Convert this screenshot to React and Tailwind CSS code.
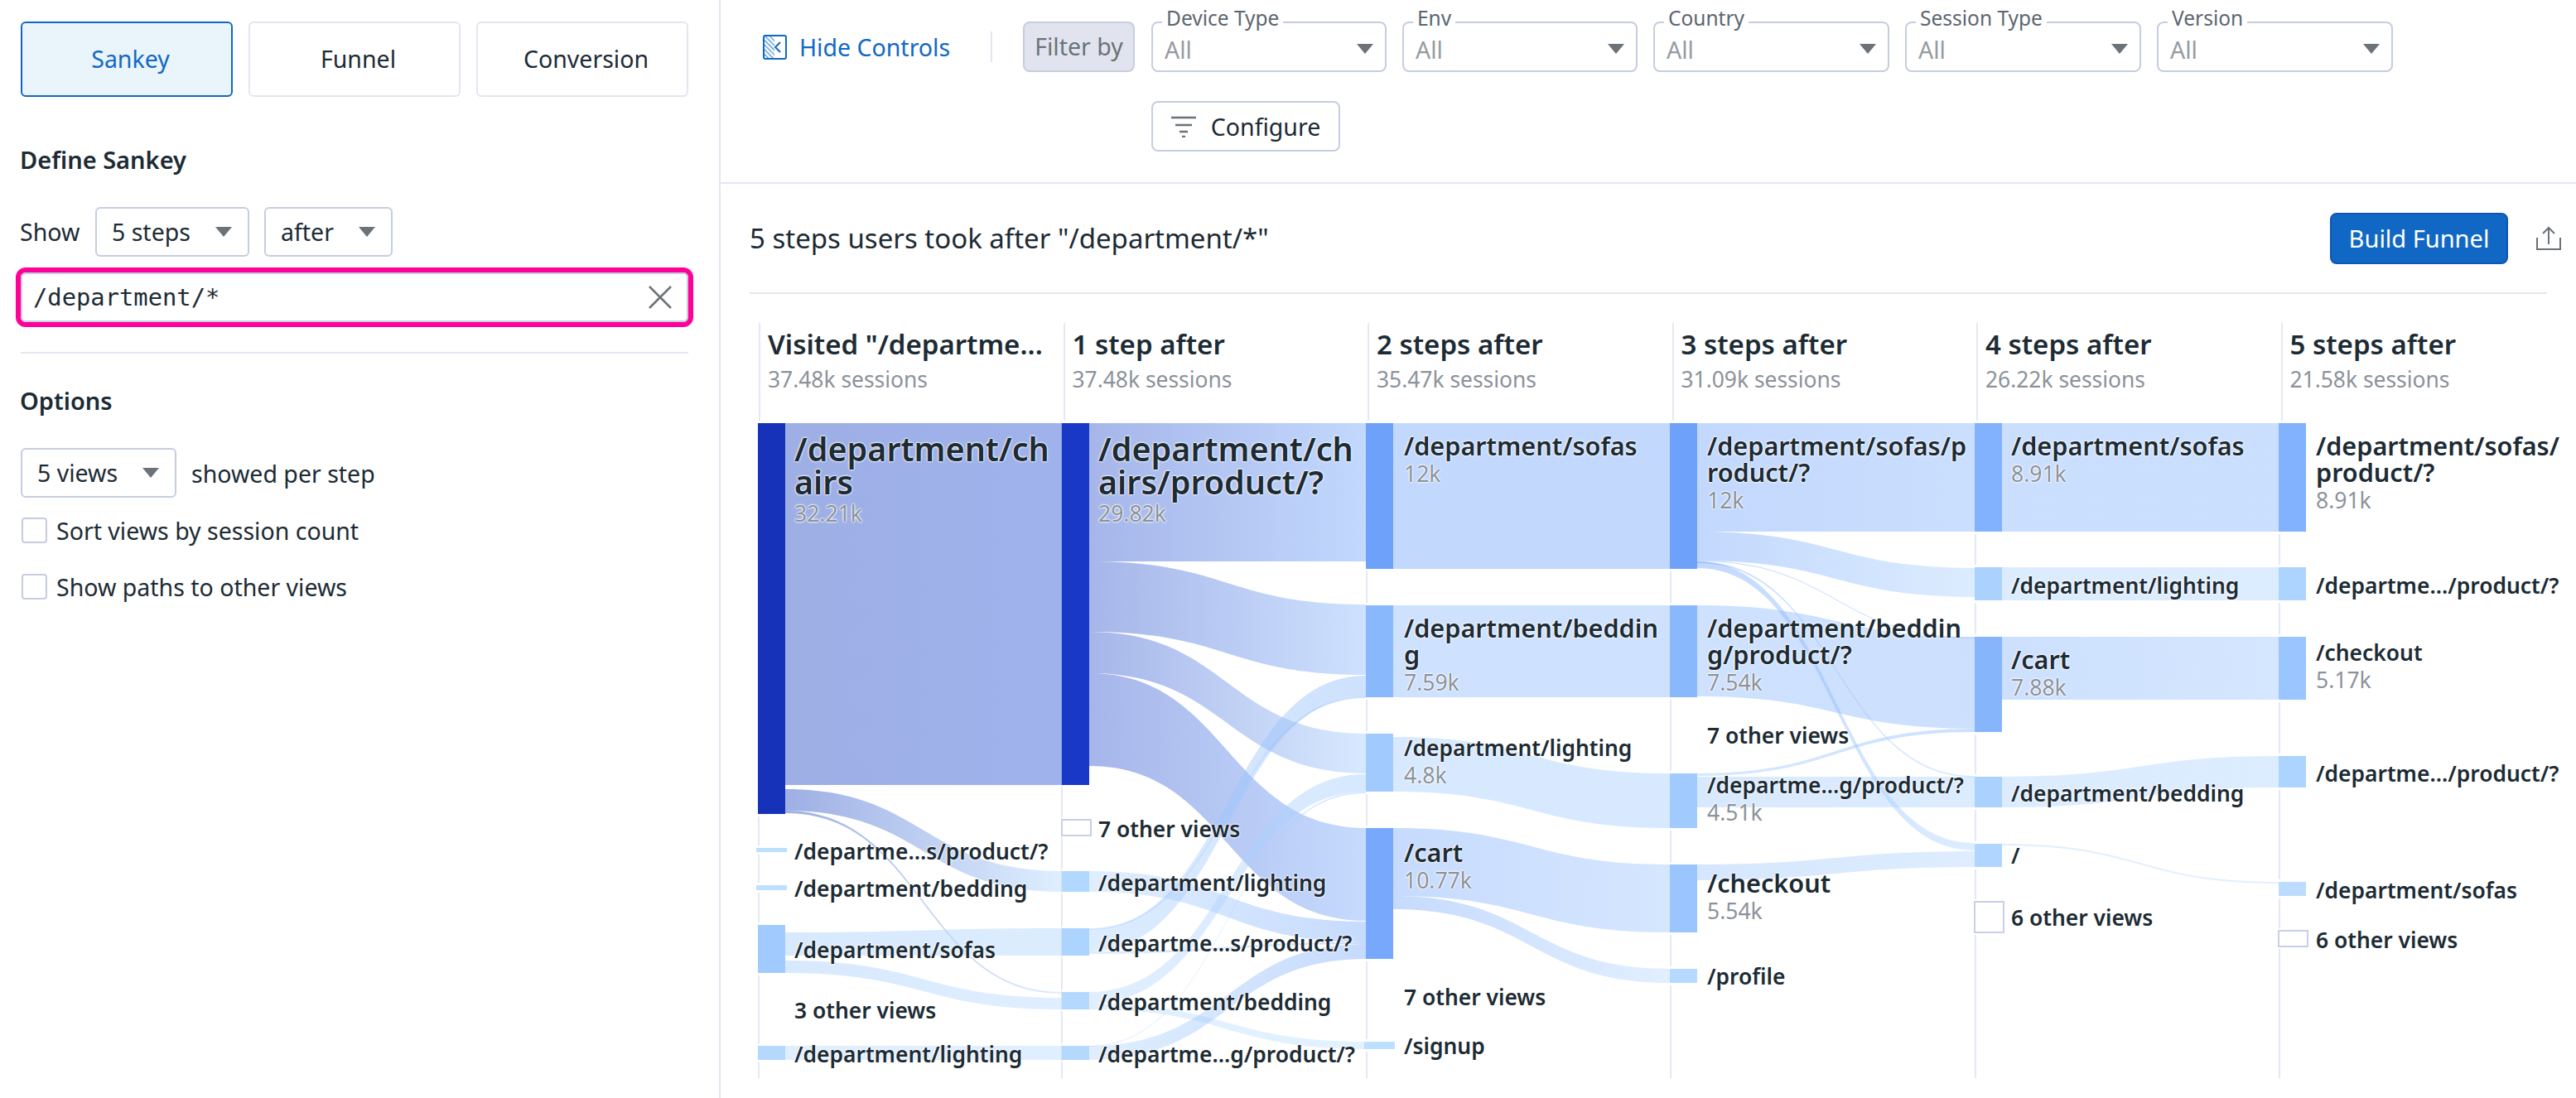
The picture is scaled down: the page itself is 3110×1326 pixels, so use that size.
import React from 'react';

const COLS = [915, 1282, 1649, 2016, 2384, 2751];
const NODE_W = 33;

// col, top, bottom, colour, kind
const NODES = [
  [0, 511, 983, '#1632b9'],
  [0, 1024, 1029, '#bde0ff', 'bar'],
  [0, 1069, 1075, '#bde0ff', 'bar'],
  [0, 1117, 1175, '#a1cbfe'],
  [0, 1263, 1280, '#b5d8ff'],
  [1, 511, 948, '#1a38c8'],
  [1, 990, 1009, '#ffffff', 'box'],
  [1, 1052, 1077, '#b3d8ff'],
  [1, 1121, 1154, '#add3ff'],
  [1, 1198, 1219, '#b5d8ff'],
  [1, 1263, 1280, '#b5d8ff'],
  [2, 511, 687, '#6ea2fa'],
  [2, 731, 842, '#8ab8fc'],
  [2, 886, 956, '#a1cbfe'],
  [2, 1000, 1158, '#78a8fb'],
  [2, 1258, 1267, '#bde0ff', 'bar'],
  [3, 511, 687, '#6ea2fa'],
  [3, 731, 842, '#8ab8fc'],
  [3, 934, 1000, '#a1cbfe'],
  [3, 1044, 1126, '#9bc5fe'],
  [3, 1170, 1187, '#b8d9ff'],
  [4, 511, 642, '#82b1fd'],
  [4, 685, 725, '#abd2ff'],
  [4, 769, 884, '#86b5fc'],
  [4, 938, 975, '#abd2ff'],
  [4, 1019, 1047, '#b0d5ff'],
  [4, 1089, 1126, '#ffffff', 'box'],
  [5, 511, 642, '#82b1fd'],
  [5, 685, 725, '#add3ff'],
  [5, 769, 845, '#9bc5fe'],
  [5, 913, 951, '#add3ff'],
  [5, 1065, 1082, '#bcdcff'],
  [5, 1124, 1143, '#ffffff', 'box'],
];

// source col, source top, source bottom, target top, target bottom, source colour, target colour
const LINKS = [
  [0, 511, 948, 511, 948, '#1640c0', '#1a48d0'],
  [0, 953, 979, 1052, 1077, '#1640c0', '#b3d8ff'],
  [0, 979, 982, 1198, 1200, '#1640c0', '#b5d8ff'],
  [0, 1126, 1154, 1121, 1154, '#a1cbfe', '#add3ff'],
  [0, 1160, 1175, 1205, 1219, '#a1cbfe', '#b5d8ff'],
  [0, 1263, 1280, 1263, 1280, '#b5d8ff', '#b5d8ff'],
  [1, 511, 678, 511, 678, '#2a50cc', '#6ea2fa'],
  [1, 678, 763, 730, 815, '#2a50cc', '#8ab8fc'],
  [1, 763, 813, 886, 934, '#2a50cc', '#a1cbfe'],
  [1, 813, 925, 1000, 1112, '#2a50cc', '#78a8fb'],
  [1, 1052, 1077, 1113, 1138, '#b3d8ff', '#78a8fb'],
  [1, 1122, 1149, 816, 841, '#add3ff', '#8ab8fc'],
  [1, 1149, 1152, 1138, 1140, '#add3ff', '#78a8fb'],
  [1, 1121, 1123, 841, 843, '#add3ff', '#8ab8fc'],
  [1, 1198, 1212, 935, 956, '#b5d8ff', '#a1cbfe'],
  [1, 1212, 1219, 1258, 1267, '#b5d8ff', '#bde0ff'],
  [1, 1263, 1280, 1140, 1158, '#b5d8ff', '#78a8fb'],
  [1, 1263, 1264, 956, 958, '#b5d8ff', '#a1cbfe'],
  [2, 511, 687, 511, 687, '#6ea2fa', '#6ea2fa'],
  [2, 731, 842, 731, 842, '#8ab8fc', '#8ab8fc'],
  [2, 890, 956, 934, 1000, '#a1cbfe', '#a1cbfe'],
  [2, 1000, 1082, 1044, 1126, '#78a8fb', '#9bc5fe'],
  [2, 1082, 1098, 1170, 1187, '#78a8fb', '#b8d9ff'],
  [3, 511, 642, 511, 642, '#6ea2fa', '#82b1fd'],
  [3, 642, 677, 686, 721, '#6ea2fa', '#abd2ff'],
  [3, 677, 678, 770, 771, '#6ea2fa', '#86b5fc'],
  [3, 678, 686, 1018, 1027, '#6ea2fa', '#b0d5ff'],
  [3, 678, 680, 937, 939, '#6ea2fa', '#abd2ff'],
  [3, 731, 841, 769, 880, '#8ab8fc', '#86b5fc'],
  [3, 934, 937, 880, 884, '#a1cbfe', '#86b5fc'],
  [3, 938, 975, 938, 975, '#a1cbfe', '#abd2ff'],
  [3, 1044, 1063, 1028, 1047, '#9bc5fe', '#b0d5ff'],
  [4, 511, 642, 511, 642, '#82b1fd', '#82b1fd'],
  [4, 685, 725, 685, 725, '#abd2ff', '#add3ff'],
  [4, 769, 845, 769, 845, '#86b5fc', '#9bc5fe'],
  [4, 938, 975, 913, 951, '#abd2ff', '#add3ff'],
  [4, 1019, 1021, 1065, 1067, '#b0d5ff', '#bcdcff'],
];

// left, top, lines, size, value
const LABELS = [
  [959, 522, ['/department/ch', 'airs'], 'lg', '32.21k'],
  [959, 1013, ['/departme...s/product/?'], 'sm'],
  [959, 1058, ['/department/bedding'], 'sm'],
  [959, 1132, ['/department/sofas'], 'sm'],
  [959, 1205, ['3 other views'], 'sm'],
  [959, 1258, ['/department/lighting'], 'sm'],
  [1326, 522, ['/department/ch', 'airs/product/?'], 'lg', '29.82k'],
  [1326, 986, ['7 other views'], 'sm'],
  [1326, 1051, ['/department/lighting'], 'sm'],
  [1326, 1124, ['/departme...s/product/?'], 'sm'],
  [1326, 1195, ['/department/bedding'], 'sm'],
  [1326, 1258, ['/departme...g/product/?'], 'sm'],
  [1695, 522, ['/department/sofas'], 'md', '12k'],
  [1695, 742, ['/department/beddin', 'g'], 'md', '7.59k'],
  [1695, 888, ['/department/lighting'], 'sm', '4.8k'],
  [1695, 1013, ['/cart'], 'md', '10.77k'],
  [1695, 1189, ['7 other views'], 'sm'],
  [1695, 1248, ['/signup'], 'sm'],
  [2061, 522, ['/department/sofas/p', 'roduct/?'], 'md', '12k'],
  [2061, 742, ['/department/beddin', 'g/product/?'], 'md', '7.54k'],
  [2061, 873, ['7 other views'], 'sm'],
  [2061, 933, ['/departme...g/product/?'], 'sm', '4.51k'],
  [2061, 1050, ['/checkout'], 'md', '5.54k'],
  [2061, 1164, ['/profile'], 'sm'],
  [2428, 522, ['/department/sofas'], 'md', '8.91k'],
  [2428, 692, ['/department/lighting'], 'sm'],
  [2428, 780, ['/cart'], 'md', '7.88k'],
  [2428, 943, ['/department/bedding'], 'sm'],
  [2428, 1018, ['/'], 'sm'],
  [2428, 1093, ['6 other views'], 'sm'],
  [2796, 522, ['/department/sofas/', 'product/?'], 'md', '8.91k'],
  [2796, 692, ['/departme.../product/?'], 'sm'],
  [2796, 773, ['/checkout'], 'sm', '5.17k'],
  [2796, 919, ['/departme.../product/?'], 'sm'],
  [2796, 1060, ['/department/sofas'], 'sm'],
  [2796, 1120, ['6 other views'], 'sm'],
];

const HEADERS = [
  ['Visited "/departme...', '37.48k sessions'],
  ['1 step after', '37.48k sessions'],
  ['2 steps after', '35.47k sessions'],
  ['3 steps after', '31.09k sessions'],
  ['4 steps after', '26.22k sessions'],
  ['5 steps after', '21.58k sessions'],
];

const SIZE = {
  lg: 'text-[39.5px] leading-[40px] font-semibold',
  md: 'text-[30.6px] leading-[32px] font-semibold',
  sm: 'text-[26.4px] leading-[30px] font-semibold',
};

const Caret = () => (
  <svg width="20" height="12" viewBox="0 0 20 12" className="shrink-0">
    <path d="M0 0H20L10 12Z" fill="#6b7278" />
  </svg>
);

const Select = ({ label, width }) => (
  <div className={`flex items-center justify-between h-[60px] border-2 border-[#c6cde0] rounded-[6px] pl-[18px] pr-[19px] ${width}`}>
    <span className="mt-[1px]">{label}</span>
    <Caret />
  </div>
);

const Tab = ({ label, active }) => (
  <div
    className={`flex items-center justify-center w-[256px] h-[91px] rounded-[6px] border-2 pl-[9px] ${
      active ? 'bg-[#eaf4fb] border-[#1168c4] text-[#1168c4]' : 'border-[#e4e6f1]'
    }`}
  >
    {label}
  </div>
);

const Check = ({ label }) => (
  <div className="flex items-center h-[31px] mb-[37px]">
    <span className="w-[31px] h-[31px] ml-px rounded-[4px] border-2 border-[#c6cde0] shrink-0" />
    <span className="ml-[11px] mt-[2px]">{label}</span>
  </div>
);

const Filter = ({ label, width }) => (
  <div className={`relative h-[61px] border-2 border-[#c6cde0] rounded-[8px] flex items-center justify-between pl-[14px] pr-[14px] pt-[4px] ${width}`}>
    <span className="absolute left-[11px] -top-[21px] bg-white px-[5px] text-[24.5px] leading-[30px] text-[#5c6670]">{label}</span>
    <span className="text-[#959ba0] mt-[3px]">All</span>
    <Caret />
  </div>
);

const Sidebar = () => (
  <aside className="w-[870px] shrink-0 h-full border-r-2 border-[#e4e6f1] px-[25px] pt-[26px]">
    <div className="flex gap-[19px]">
      <Tab label="Sankey" active />
      <Tab label="Funnel" />
      <Tab label="Conversion" />
    </div>
    <h2 className="font-semibold mt-[56px] leading-[40px] -ml-px text-[29px]">Define Sankey</h2>
    <div className="flex items-center mt-[37px]">
      <span className="w-[90px] -ml-px mr-px">Show</span>
      <Select label="5 steps" width="w-[186px]" />
      <div className="w-[18px]" />
      <Select label="after" width="w-[155px]" />
    </div>
    <div className="-mx-[6px] mt-[13px] h-[72px] w-[818px] rounded-[12px] border-[6px] border-[#ff0099]">
      <div className="h-full flex items-center justify-between border-2 border-[#c6cde0] rounded-[6px] pl-[13px] pr-[17px] font-['DejaVu_Sans_Mono',monospace] text-[28.8px]">
        <span className="mt-[2px]">/department/*</span>
        <svg width="30" height="30" viewBox="0 0 30 30">
          <path d="M2 2L28 28M28 2L2 28" stroke="#6b7278" strokeWidth="2.5" fill="none" />
        </svg>
      </div>
    </div>
    <div className="h-[2px] bg-[#e4e6f1] w-[806px] mt-[30px]" />
    <h2 className="font-semibold mt-[37px] leading-[40px] -ml-px text-[29px]">Options</h2>
    <div className="flex items-center mt-[37px] mb-[24px]">
      <Select label="5 views" width="w-[188px]" />
      <span className="ml-[18px] mt-[2px]">showed per step</span>
    </div>
    <Check label="Sort views by session count" />
    <Check label="Show paths to other views" />
  </aside>
);

const FilterBar = () => (
  <div className="h-[222px] shrink-0 border-b-2 border-[#e4e6f1] flex items-start pt-[26px] pl-[51px]">
    <div className="flex items-center h-[61px] w-[227px] text-[#1168c4]">
      <svg width="29" height="30" viewBox="0 0 29 30" className="mr-[15px] shrink-0">
        <defs>
          <pattern id="hatch" width="4" height="4" patternUnits="userSpaceOnUse" patternTransform="rotate(-45)">
            <rect width="1.4" height="4" fill="#1168c4" fillOpacity="0.7" />
          </pattern>
        </defs>
        <rect x="1" y="1" width="27" height="28" rx="2" fill="none" stroke="#1168c4" strokeWidth="2" />
        <rect x="2" y="2" width="12" height="26" fill="url(#hatch)" />
        <path d="M21 9L15 15L21 21" fill="none" stroke="#1168c4" strokeWidth="2" />
      </svg>
      <span className="whitespace-nowrap mt-[2px]">Hide Controls</span>
    </div>
    <div className="w-[2px] h-[37px] bg-[#e4e6f1] ml-[48px] mt-[12px]" />
    <div className="ml-[37px] h-[61px] w-[135px] flex items-center justify-center bg-[#e1e4ef] border-2 border-[#c6cde0] rounded-[8px] text-[#6b7278]">
      Filter by
    </div>
    <div className="ml-[20px] flex flex-col gap-[35px]">
      <div className="flex gap-[19px]">
        <Filter label="Device Type" width="w-[284px]" />
        <Filter label="Env" width="w-[284px]" />
        <Filter label="Country" width="w-[285px]" />
        <Filter label="Session Type" width="w-[285px]" />
        <Filter label="Version" width="w-[285px]" />
      </div>
      <div className="flex items-center justify-center gap-[18px] w-[228px] h-[61px] border-2 border-[#c6cde0] rounded-[8px]">
        <svg width="30" height="26" viewBox="0 0 30 26">
          <path d="M0 2H30M5 11H25M10 19H20M13 25H17" stroke="#6b7278" strokeWidth="2.5" fill="none" />
        </svg>
        <span className="mt-[2px]">Configure</span>
      </div>
    </div>
  </div>
);

const TitleRow = () => (
  <div className="mx-[35px] h-[133px] shrink-0 border-b-2 border-[#e4e6f1] flex items-center justify-between">
    <span className="text-[33px]">5 steps users took after "/department/*"</span>
    <div className="flex items-center mr-[-17px]">
      <div className="flex items-center justify-center w-[215px] h-[62px] bg-[#1168c4] border-2 border-[#0f55b8] rounded-[8px] text-white text-[29px]">
        Build Funnel
      </div>
      <svg width="30" height="30" viewBox="0 0 30 30" className="ml-[34px]">
        <path d="M15 22V2M8 9L15 2L22 9" fill="none" stroke="#6b7278" strokeWidth="2" />
        <path d="M1 14V28H29V14" fill="none" stroke="#6b7278" strokeWidth="2" />
      </svg>
    </div>
  </div>
);

const ribbon = (x0, x1, a0, a1, b0, b1) => {
  const mx = (x0 + x1) / 2;
  return `M${x0} ${a0}C${mx} ${a0} ${mx} ${b0} ${x1} ${b0}L${x1} ${b1}C${mx} ${b1} ${mx} ${a1} ${x0} ${a1}Z`;
};

const Chart = () => (
  <div className="relative h-[818px] shrink-0">
    <svg width="2240" height="818" viewBox="870 508 2240 818" className="block">
      <defs>
        {LINKS.map((l, i) => (
          <linearGradient key={i} id={`lk${i}`} gradientUnits="userSpaceOnUse" x1={COLS[l[0]] + NODE_W} x2={COLS[l[0] + 1]} y1="0" y2="0">
            <stop offset="0" stopColor={l[5]} stopOpacity="0.42" />
            <stop offset="1" stopColor={l[6]} stopOpacity="0.42" />
          </linearGradient>
        ))}
      </defs>
      {[916, 1282, 1650, 2017, 2385, 2752].map((x) => (
        <line key={x} x1={x} x2={x} y1="508" y2="1302" stroke="#e4e8f2" strokeWidth="2" />
      ))}
      {NODES.map(([c, a, b], i) => (
        <rect key={i} x={COLS[c]} y={a - 3} width={NODE_W} height={b - a + 6} fill="#fff" />
      ))}
      {LINKS.map((l, i) => (
        <path key={i} d={ribbon(COLS[l[0]] + NODE_W, COLS[l[0] + 1], l[1], l[2], l[3], l[4])} fill={`url(#lk${i})`} />
      ))}
      {NODES.map(([c, a, b, fill, kind], i) => {
        if (kind === 'box') {
          return <rect key={i} x={COLS[c]} y={a} width={NODE_W + 2} height={b - a} fill="#fff" stroke="#c9cfe6" strokeWidth="2" />;
        }
        if (kind === 'bar') {
          return <rect key={i} x={COLS[c] - 2} y={a} width={NODE_W + 4} height={b - a} fill={fill} />;
        }
        return <rect key={i} x={COLS[c]} y={a} width={NODE_W} height={b - a} fill={fill} />;
      })}
    </svg>
    {LABELS.map(([x, y, lines, size, value], i) => (
      <div
        key={i}
        className="absolute whitespace-nowrap [text-shadow:0_0_2px_white,0_0_2px_white,0_0_3px_white]"
        style={{ left: x - 870, top: y - 508 }}
      >
        {lines.map((t) => (
          <div key={t} className={SIZE[size]}>{t}</div>
        ))}
        {value && <div className="text-[26.5px] leading-[30px] mt-[3px] text-[#8b929a]">{value}</div>}
      </div>
    ))}
  </div>
);

export default function App() {
  return (
    <div className="flex h-[1326px] w-[3110px] overflow-hidden bg-white font-['Noto_Sans',sans-serif] text-[28.5px] text-[#1c2b34]">
      <Sidebar />
      <main className="flex-1 min-w-0 flex flex-col">
        <FilterBar />
        <TitleRow />
        <div className="flex pl-[46px] mt-[35px] h-[118px] shrink-0">
          {HEADERS.map(([title, sub]) => (
            <div key={title} className="w-[367.5px] shrink-0 border-l-2 border-[#e4e8f2] pl-[9px] pt-[6px]">
              <div className="text-[33px] leading-[40px] font-semibold whitespace-nowrap">{title}</div>
              <div className="text-[26.4px] leading-[32px] mt-[6px] text-[#8b929a]">{sub}</div>
            </div>
          ))}
        </div>
        <Chart />
      </main>
    </div>
  );
}
